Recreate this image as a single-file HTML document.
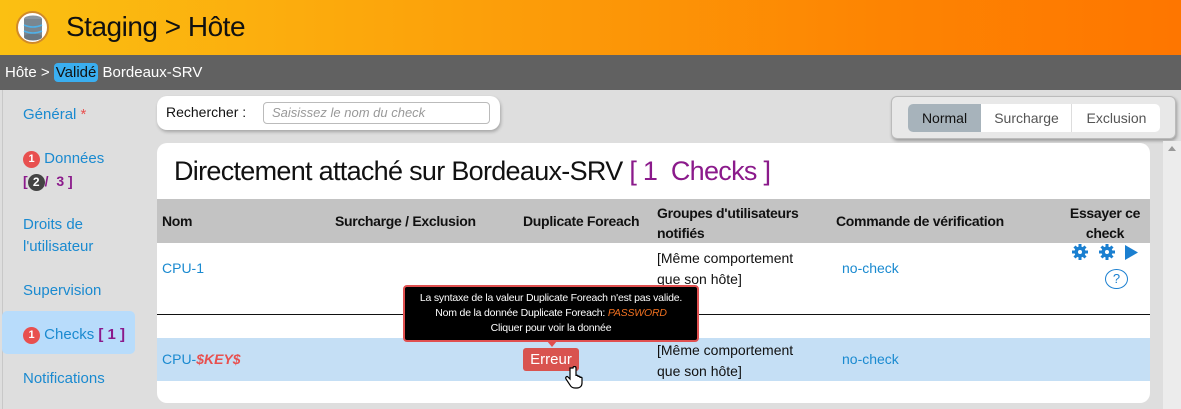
<!DOCTYPE html>
<html><head><meta charset="utf-8"><style>
*{margin:0;padding:0;box-sizing:border-box}
body{width:1181px;height:409px;overflow:hidden;background:#dedede;font-family:"Liberation Sans",sans-serif;position:relative;color:#111}
.a{position:absolute;white-space:nowrap}
.hdr{left:0;top:0;width:1181px;height:55px;background:linear-gradient(90deg,#fbc012 0%,#fca00a 40%,#fd8402 75%,#fe7600 100%)}
.bc{left:0;top:55px;width:1181px;height:35px;background:#616161;color:#fff;font-size:15px}
.side a,.lnk{color:#1a8ad0;text-decoration:none}
.badge{display:inline-block;width:17px;height:17px;border-radius:50%;background:#e8504f;color:#fff;font-size:11px;font-weight:bold;text-align:center;line-height:17px;vertical-align:1px}
.pur{color:#8b1a8b}
.card{background:#fff;border-radius:10px}
.th{font-weight:bold;font-size:14px;color:#111;letter-spacing:-0.3px}
</style></head><body>
<div class="a hdr"></div>
<div class="a" style="left:16px;top:11px;width:33px;height:33px;border-radius:50%;background:#fff;border:2px solid #d08a2a"></div>
<svg class="a" style="left:22px;top:15px" width="22" height="26" viewBox="0 0 22 26"><ellipse cx="11" cy="4" rx="9" ry="3.5" fill="#8a96a0"/><rect x="2" y="4" width="18" height="18" fill="#7a8690"/><ellipse cx="11" cy="22" rx="9" ry="3.5" fill="#6a7680"/><path d="M2 10 Q11 14 20 10M2 16 Q11 20 20 16" stroke="#4fb2ea" stroke-width="1.6" fill="none"/></svg>
<div class="a" style="left:66px;top:11px;font-size:28px;letter-spacing:-0.5px;color:#111">Staging &gt; Hôte</div>
<div class="a bc"></div>
<div class="a" style="left:5px;top:64px;font-size:15px;color:#fff">Hôte &gt; <span style="background:#3aaef0;border-radius:4px;padding:1px 2px;color:#111">Validé</span> Bordeaux-SRV</div>
<div class="a" style="left:2px;top:90px;width:1px;height:319px;background:#c8c8c8"></div>
<div class="a" style="left:2px;top:311px;width:133px;height:43px;background:#b8dcfb;border-radius:5px"></div>
<div class="side" style="font-size:15px">
<div class="a" style="left:23px;top:106px"><a>Général</a> <span style="color:#e8504f">*</span></div>
<div class="a" style="left:23px;top:150px"><span class="badge">1</span> <a>Données</a></div>
<div class="a pur" style="left:23px;top:173px;font-weight:bold;font-size:14px">[<span style="display:inline-block;width:17px;height:17px;border-radius:50%;background:#444;color:#fff;font-size:12px;text-align:center;line-height:17px">2</span>/&nbsp; 3 ]</div>
<div class="a" style="left:23px;top:216px"><a>Droits de</a></div>
<div class="a" style="left:23px;top:238px"><a>l'utilisateur</a></div>
<div class="a" style="left:23px;top:282px"><a>Supervision</a></div>
<div class="a" style="left:23px;top:326px"><span class="badge">1</span> <a>Checks</a> <span class="pur" style="font-weight:bold">[ 1 ]</span></div>
<div class="a" style="left:23px;top:370px"><a>Notifications</a></div>
</div>
<div class="a card" style="left:157px;top:96px;width:343px;height:34px;box-shadow:1px 2px 3px rgba(0,0,0,.25)"></div>
<div class="a" style="left:166px;top:104px;font-size:14px">Rechercher :</div>
<div class="a" style="left:263px;top:102px;width:227px;height:22px;border:1px solid #bbb;border-radius:4px;font-size:13px;color:#999;font-style:italic;padding:2px 8px">Saisissez le nom du check</div>
<div class="a" style="left:891px;top:96px;width:285px;height:43px;background:#e8e8e8;border:1px solid #bbb;border-radius:6px;box-shadow:1px 2px 3px rgba(0,0,0,.3)"></div>
<div class="a" style="left:908px;top:104px;width:252px;height:28px;background:#fff;border-radius:5px;overflow:hidden;font-size:14px;color:#555">
<span class="a" style="left:0;top:0;width:73px;height:28px;background:#a7b3bb;color:#111;text-align:center;line-height:28px">Normal</span>
<span class="a" style="left:74px;top:0;width:90px;height:28px;border-right:1px solid #ddd;text-align:center;line-height:28px">Surcharge</span>
<span class="a" style="left:165px;top:0;width:87px;height:28px;text-align:center;line-height:28px">Exclusion</span></div>
<div class="a card" style="left:157px;top:143px;width:993px;height:260px"></div>
<div class="a" style="left:1163px;top:141px;width:18px;height:268px;background:#ececec"></div>
<div class="a" style="left:1168px;top:146px;width:0;height:0;border:4px solid transparent;border-bottom:5px solid #999;border-top:none"></div>
<div class="a" style="left:174px;top:156px;font-size:27px;letter-spacing:-0.7px">Directement attaché sur Bordeaux-SRV <span class="pur">[ 1&nbsp; Checks ]</span></div>
<div class="a" style="left:157px;top:199px;width:993px;height:44px;background:#c3c3c3"></div>
<div class="a th" style="left:162px;top:213px">Nom</div>
<div class="a th" style="left:335px;top:213px">Surcharge / Exclusion</div>
<div class="a th" style="left:523px;top:213px">Duplicate Foreach</div>
<div class="a th" style="left:657px;top:203px;line-height:20px">Groupes d'utilisateurs<br>notifiés</div>
<div class="a th" style="left:836px;top:213px">Commande de vérification</div>
<div class="a th" style="left:1060px;top:203px;line-height:20px;width:90px;text-align:center">Essayer ce<br>check</div>
<div class="a lnk" style="left:162px;top:260px;font-size:14px">CPU-1</div>
<div class="a" style="left:657px;top:248px;font-size:14px;line-height:21px">[Même comportement<br>que son hôte]</div>
<div class="a lnk" style="left:842px;top:260px;font-size:14px">no-check</div>
<svg class="a" style="left:1072px;top:244px" width="68" height="18" viewBox="0 0 68 18"><g fill="#1a7fd0"><circle cx="8" cy="8" r="5.5"/><circle cx="35" cy="8" r="5.5"/><g stroke="#1a7fd0" stroke-width="3"><path d="M8 0v16M0 8h16M2.5 2.5l11 11M13.5 2.5l-11 11"/><path d="M35 0v16M27 8h16M29.5 2.5l11 11M40.5 2.5l-11 11"/></g><circle cx="8" cy="8" r="2" fill="#fff"/><circle cx="35" cy="8" r="2" fill="#fff"/><path d="M53 1l13 7.5-13 7.5z"/></g></svg>
<div class="a" style="left:1105px;top:269px;width:23px;height:20px;border:1px solid #1a7fd0;border-radius:50%;color:#1a7fd0;font-size:13px;text-align:center;line-height:18px">?</div>
<div class="a" style="left:157px;top:314px;width:993px;height:1px;background:#111"></div>
<div class="a" style="left:157px;top:338px;width:993px;height:43px;background:#c5dff5"></div>
<div class="a lnk" style="left:162px;top:351px;font-size:14px">CPU-<b style="color:#e8504f;font-style:italic">$KEY$</b></div>
<div class="a" style="left:657px;top:340px;font-size:14px;line-height:21px">[Même comportement<br>que son hôte]</div>
<div class="a lnk" style="left:842px;top:351px;font-size:14px">no-check</div>
<div class="a" style="left:523px;top:348px;width:56px;height:23px;background:#d9534f;border-radius:3px;color:#fff;font-size:15px;text-align:center;line-height:23px">Erreur</div>
<div class="a" style="left:547px;top:341px;width:0;height:0;border:5px solid transparent;border-top:6px solid #e05050;border-bottom:none"></div>
<div class="a" style="left:403px;top:285px;width:296px;height:57px;background:#000;border:2px solid #e05050;border-radius:4px;color:#fff;font-size:10.5px;text-align:center;line-height:15px;padding-top:4px;letter-spacing:-0.2px">La syntaxe de la valeur Duplicate Foreach n'est pas valide.<br>Nom de la donnée Duplicate Foreach: <i style="color:#f07020">PASSWORD</i><br>Cliquer pour voir la donnée</div>
<svg class="a" style="left:565px;top:366px" width="18" height="24" viewBox="0 0 18 24"><path d="M5 2v11l-2-2c-1-1-3 0-2 2l4 6c1 2 3 3 5 3h2c3 0 5-2 5-5v-5c0-1-2-1-2 0v-1c0-1-2-1-2 0v-1c0-1-2-1-2 0V2c0-2-3-2-3 0z" fill="#fff" stroke="#000" stroke-width="1.2"/></svg>
</body></html>
